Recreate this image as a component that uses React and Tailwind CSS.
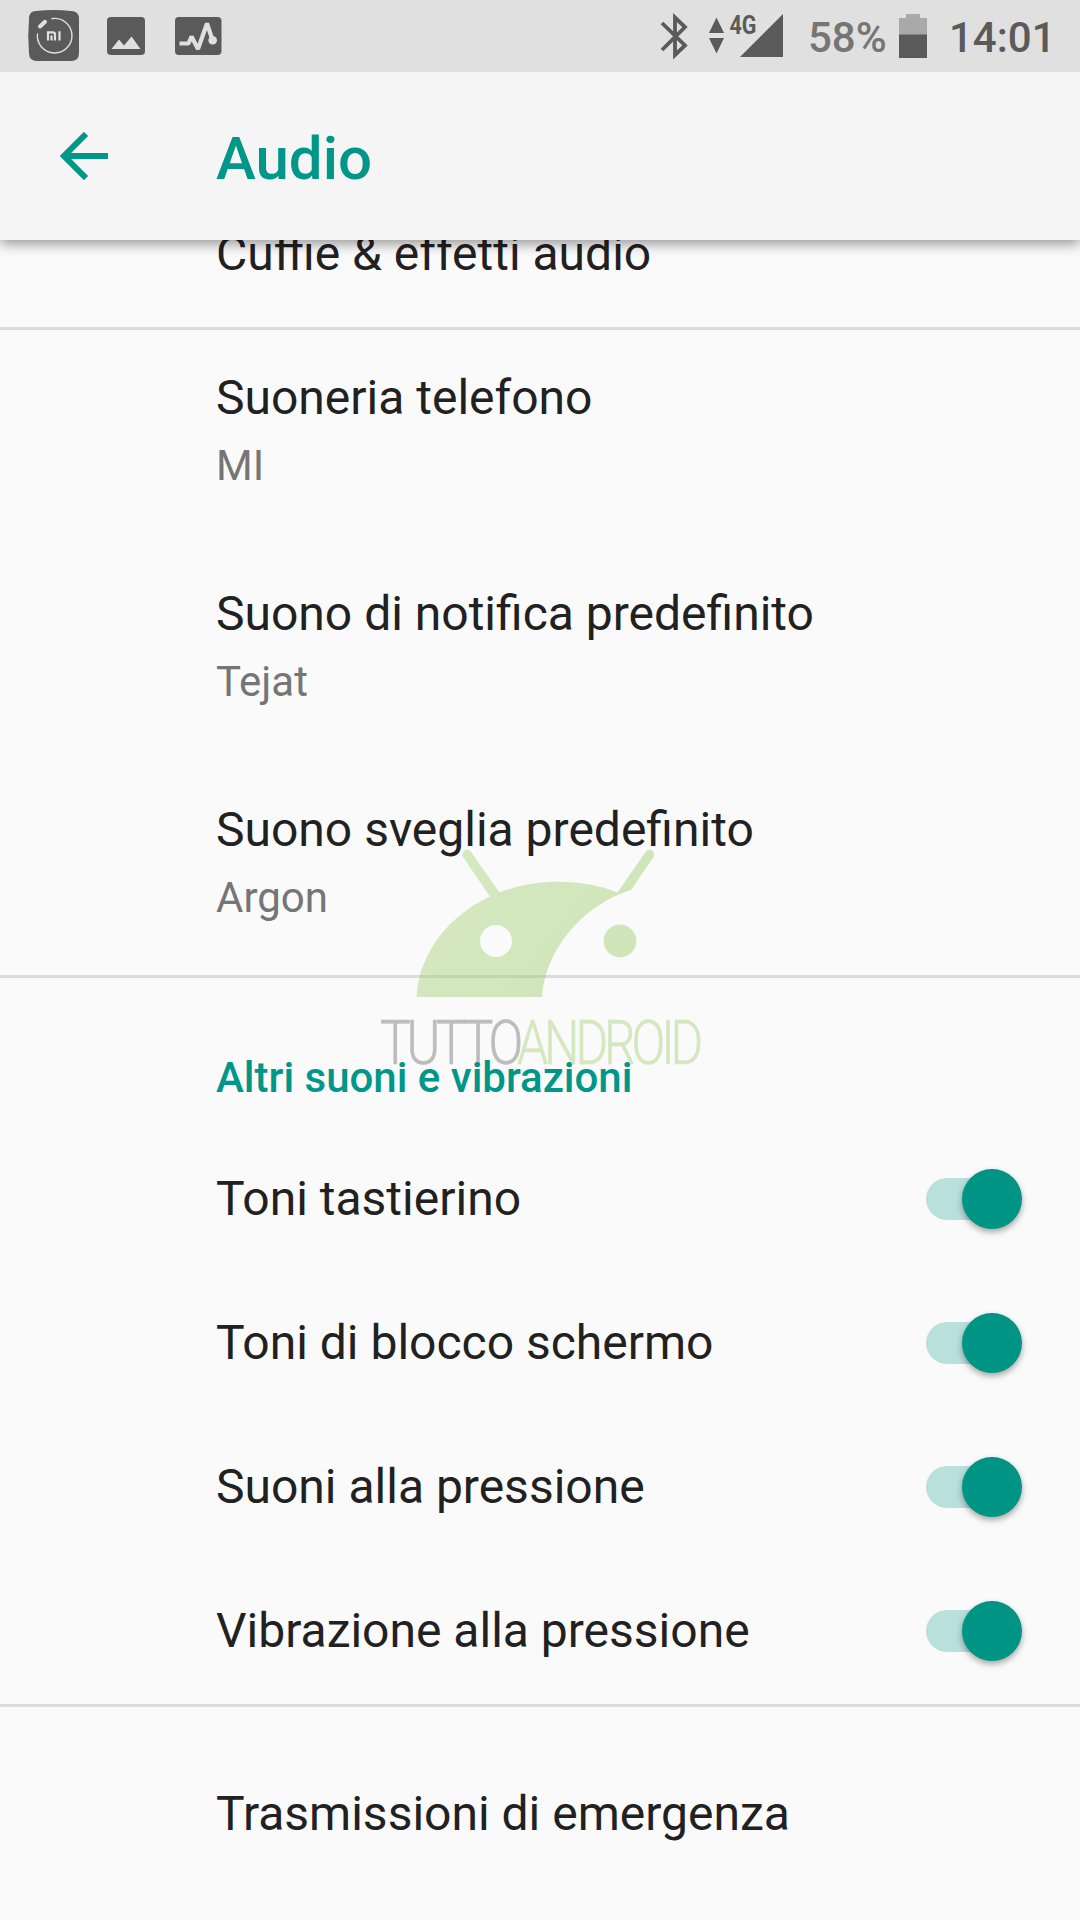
const sounds = [
  { title: 'Suoneria telefono', summary: 'MI' },
  { title: 'Suono di notifica predefinito', summary: 'Tejat' },
  { title: 'Suono sveglia predefinito', summary: 'Argon' },
];

const toggles = [
  'Toni tastierino',
  'Toni di blocco schermo',
  'Suoni alla pressione',
  'Vibrazione alla pressione',
];

function StatusBar() {
  return (
    <div className="relative z-20 flex h-[72px] items-start justify-between bg-[#e0e0e0] text-[#5a5a5a]">
      <svg className="h-[72px] w-[240px]" viewBox="0 0 240 72" fill="none">
        <path
          d="M36 11 Q53.500 9 71 11 Q79 11 79 19 V53 Q79 61 71 61 H37 Q29 61 29 53 Q27.500 36 29 19 Q29 11 36 11Z"
          fill="#5a5a5a"
        />
        <path d="M51.500 18.700 A17.300 17.300 0 1 1 37.500 33.500" stroke="#e0e0e0" strokeWidth="1.400" />
        <path d="M40 26.500 L45 21.800" stroke="#e0e0e0" strokeWidth="4" strokeLinecap="round" />
        <path d="M48 40.500 V32.300 H53 Q55 32.300 55 34.300 V40.500 M51.500 35.500 V40.500 M59.500 31.200 V40.500" stroke="#e0e0e0" strokeWidth="2.200" />
        <rect x="107" y="17" width="38" height="38" rx="4" fill="#5a5a5a" />
        <path d="M111.500 49 L119 39.500 L124 45.500 L131.500 36.500 L140.500 49Z" fill="#e0e0e0" />
        <rect x="175" y="17" width="46.500" height="38" rx="4" fill="#5a5a5a" />
        <path
          d="M179.500 43.500 H188.500 L191.500 36.500 L198 49 L207 23.500 L212.500 40"
          stroke="#e0e0e0"
          strokeWidth="4.200"
          strokeLinejoin="bevel"
        />
        <circle cx="212.700" cy="40.300" r="4.300" fill="#e0e0e0" />
      </svg>

      <div className="flex pr-[30px]">
        <svg className="h-[72px] w-[150px]" viewBox="650 0 150 72" fill="none">
          <path d="M662 23 L685 45.500 L675 55 V17.500 L685 27 L662 50" stroke="#5a5a5a" strokeWidth="3.800" />
          <path d="M716.500 17.500 L724 33 H709Z M709 38 H724 L716.500 53.500Z" fill="#5a5a5a" />
          <text
            x="729.500"
            y="33.500"
            textLength="27"
            lengthAdjust="spacingAndGlyphs"
            fontSize="25"
            fontWeight="700"
            fill="#5a5a5a"
          >
            4G
          </text>
          <path d="M783 14 V57 H740Z" fill="#5a5a5a" />
        </svg>
        <span className="mt-[13px] w-[99px] pl-[8px] text-[42px] leading-[50px] font-medium text-[#757575]">58%</span>
        <svg className="h-[72px] w-[28px]" viewBox="0 0 28 72">
          <path d="M7 14 H21 V18 H28 V35 H0 V18 H7Z" fill="#a9a9a9" />
          <path d="M0 34.500 H28 V58 H0Z" fill="#5a5a5a" />
        </svg>
        <span className="mt-[13px] ml-[22px] w-[101px] text-[42px] leading-[50px] font-medium">14:01</span>
      </div>
    </div>
  );
}

function AppBar() {
  return (
    <header className="relative z-10 flex h-[168px] items-center bg-[#f5f5f5] text-[#009688] shadow-[0_4px_12px_rgba(0,0,0,0.4)]">
      <svg className="ml-[60px] h-[48px] w-[48px]" viewBox="0 0 48 48" fill="none">
        <path d="M48 24 H6 M26 2 L4 24 L26 46" stroke="currentColor" strokeWidth="6" />
      </svg>
      <h1 className="mt-[6px] ml-[108px] text-[60px] leading-[70px] font-medium">Audio</h1>
    </header>
  );
}

function Switch() {
  return (
    <div className="flex h-[60px] w-[96px] items-center">
      <div className="h-[42px] w-[82px] rounded-full bg-[#b8e0dc]" />
      <div className="-ml-[46px] h-[60px] w-[60px] shrink-0 rounded-full bg-[#009485] shadow-[0_3px_6px_rgba(0,0,0,0.35)]" />
    </div>
  );
}

function Watermark() {
  return (
    <svg className="pointer-events-none absolute top-[840px] left-[370px] h-[240px] w-[340px] opacity-40" viewBox="0 0 340 240">
      <defs>
        <linearGradient id="green" x1="0" y1="0" x2="1" y2="0.5">
          <stop offset="0" stopColor="#a3d070" />
          <stop offset="1" stopColor="#90c858" />
        </linearGradient>
      </defs>
      <path
        fill="url(#green)"
        fillRule="evenodd"
        d="M46.500 157 C49 112 80 75 120 56.500 L93 17 A4.700 4.700 0 0 1 101 12 L129.500 52.500 C165 38 212 38 247.500 52.500 L275.500 12 A4.700 4.700 0 0 1 283.500 17 L261 50 C210 66 175 112 172 157Z M142 101 A16 16 0 1 0 110 101 A16 16 0 1 0 142 101Z"
      />
      <circle cx="250" cy="101" r="16.400" fill="#93ca5d" />
      <g fontSize="61" fontWeight="300" letterSpacing="-5" strokeWidth="0.600">
        <text x="10" y="223.500" textLength="139" lengthAdjust="spacingAndGlyphs" fill="#626262" stroke="#626262">
          TUTTO
        </text>
        <text x="147" y="223.500" textLength="182" lengthAdjust="spacingAndGlyphs" fill="#9dcd66" stroke="#9dcd66">
          ANDROID
        </text>
      </g>
    </svg>
  );
}

export default function App() {
  return (
    <div className="relative h-[1920px] w-[1080px] overflow-hidden bg-[#fafafa] font-[Roboto,sans-serif] text-[#212121]">
      <StatusBar />
      <AppBar />

      <div className="flex h-[87px] items-start pl-[216px] text-[48px] leading-[56px]">
        <p className="-mt-[14px]">Cuffie &amp; effetti audio</p>
      </div>

      <section className="h-[648px] border-t-[3px] border-[#dcdcdc]">
        {sounds.map((s) => (
          <div key={s.title} className="h-[216px] pt-[40px] pl-[216px]">
            <p className="text-[48px] leading-[56px]">{s.title}</p>
            <p className="mt-[15px] text-[42px] leading-[50px] text-[#757575]">{s.summary}</p>
          </div>
        ))}
      </section>

      <section className="h-[729px] border-t-[3px] border-[#dcdcdc] pl-[216px]">
        <h2 className="h-[149px] pt-[75px] text-[42px] leading-[50px] font-medium text-[#009688]">
          Altri suoni e vibrazioni
        </h2>
        {toggles.map((label) => (
          <div key={label} className="flex h-[144px] items-center justify-between pr-[58px]">
            <p className="text-[48px] leading-[56px]">{label}</p>
            <Switch />
          </div>
        ))}
      </section>

      <section className="border-t-[3px] border-[#dcdcdc] pt-[79px] pl-[216px]">
        <p className="text-[48px] leading-[56px]">Trasmissioni di emergenza</p>
      </section>

      <Watermark />
    </div>
  );
}
